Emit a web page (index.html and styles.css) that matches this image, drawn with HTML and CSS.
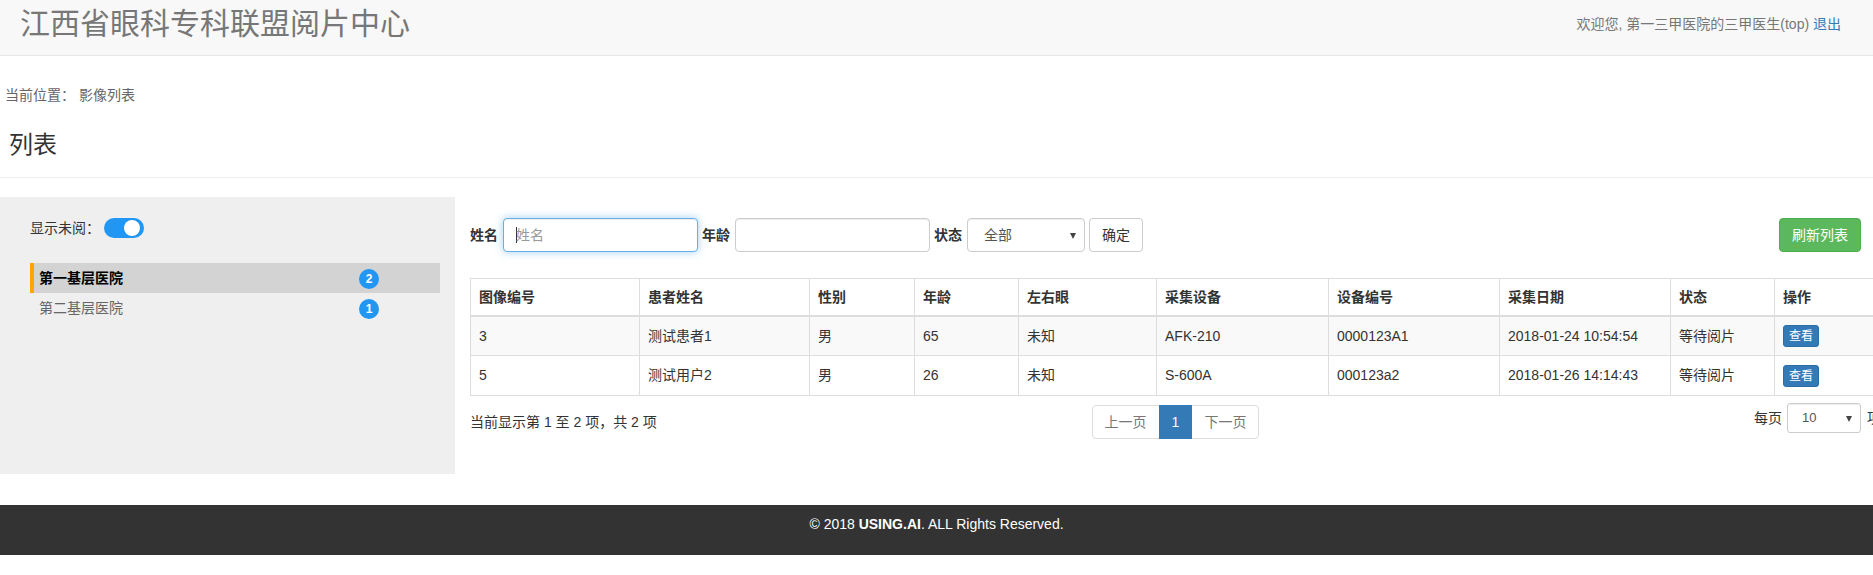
FILE: index.html
```html
<!DOCTYPE html>
<html lang="zh-CN">
<head>
<meta charset="utf-8">
<title>江西省眼科专科联盟阅片中心</title>
<link rel="stylesheet" href="styles.css">
</head>
<body>
<header class="navbar">
  <div class="brand">江西省眼科专科联盟阅片中心</div>
  <div class="user">欢迎您, 第一三甲医院的三甲医生(top) <a href="#" class="logout">退出</a></div>
</header>

<div class="page-head">
  <div class="crumb">当前位置： 影像列表</div>
  <h3 class="page-title">列表</h3>
</div>
<hr class="divider">

<div class="content">
  <aside class="sidebar">
    <div class="toggle-row">
      <span class="toggle-label">显示未阅：</span>
      <span class="switch"><span class="knob"></span></span>
    </div>
    <ul class="hosp-list">
      <li class="hosp active"><span class="hosp-name">第一基层医院</span><span class="badge">2</span></li>
      <li class="hosp"><span class="hosp-name">第二基层医院</span><span class="badge">1</span></li>
    </ul>
  </aside>

  <main class="main">
    <div class="filter">
      <label class="f-label">姓名</label>
      <input class="f-input focused" type="text" placeholder="姓名">
      <label class="f-label">年龄</label>
      <input class="f-input" type="text">
      <label class="f-label">状态</label>
      <div class="select-wrap status-select">
        <select class="f-select"><option>全部</option></select>
      </div>
      <button class="btn btn-default">确定</button>
      <button class="btn btn-success">刷新列表</button>
    </div>

    <table class="grid">
      <colgroup>
        <col class="c1"><col class="c2"><col class="c3"><col class="c4"><col class="c5">
        <col class="c6"><col class="c7"><col class="c8"><col class="c9"><col class="c10">
      </colgroup>
      <thead>
        <tr>
          <th>图像编号</th><th>患者姓名</th><th>性别</th><th>年龄</th><th>左右眼</th>
          <th>采集设备</th><th>设备编号</th><th>采集日期</th><th>状态</th><th>操作</th>
        </tr>
      </thead>
      <tbody>
        <tr class="odd">
          <td>3</td><td>测试患者1</td><td>男</td><td>65</td><td>未知</td>
          <td>AFK-210</td><td>0000123A1</td><td>2018-01-24 10:54:54</td><td>等待阅片</td>
          <td><button class="btn-xs">查看</button></td>
        </tr>
        <tr>
          <td>5</td><td>测试用户2</td><td>男</td><td>26</td><td>未知</td>
          <td>S-600A</td><td>000123a2</td><td>2018-01-26 14:14:43</td><td>等待阅片</td>
          <td><button class="btn-xs">查看</button></td>
        </tr>
      </tbody>
    </table>

    <div class="table-foot">
      <div class="info">当前显示第 1 至 2 项，共 2 项</div>
      <ul class="pagination">
        <li class="pg disabled"><a href="#">上一页</a></li>
        <li class="pg current"><a href="#">1</a></li>
        <li class="pg disabled"><a href="#">下一页</a></li>
      </ul>
      <div class="length">
        <span>每页</span>
        <div class="select-wrap len-select">
          <select class="f-select small"><option>10</option></select>
        </div>
        <span>项</span>
      </div>
    </div>
  </main>
</div>

<footer class="footer">© 2018 <b>USING.AI</b>. ALL Rights Reserved.</footer>
</body>
</html>
```

FILE: styles.css
```css
html {
  overflow-x: hidden;
}

body {
  margin: 0;
  font-family: "Liberation Sans", Arial, "Noto Sans CJK SC", sans-serif;
  font-size: 14px;
  line-height: 20px;
  color: #333;
  background: #fff;
  overflow-x: hidden;
}

/* Header */
.navbar {
  height: 55px;
  background: #f8f8f8;
  border-bottom: 1px solid #e7e7e7;
  display: flex;
  align-items: center;
  justify-content: space-between;
  padding: 0 32px 0 20px;
}

.brand {
  font-size: 30px;
  line-height: 36px;
  color: #777;
  margin-top: -8px;
}

.user {
  color: #777;
  font-size: 14px;
  margin-top: -8px;
}

.logout {
  color: #337ab7;
  text-decoration: none;
}

/* Page heading */
.page-head {
  padding: 0 0 0 5px;
}

.crumb {
  margin-top: 29px;
  color: #666;
  font-size: 14px;
  line-height: 20px;
}

.page-title {
  margin: 26px 0 0 4px;
  font-size: 24px;
  line-height: 28px;
  font-weight: normal;
  color: #333;
}

.divider {
  margin: 18px 0 0;
  border: 0;
  border-top: 1px solid #eee;
  height: 0;
}

/* Content */
.content {
  display: flex;
  align-items: flex-start;
  margin-top: 19px;
}

.sidebar {
  flex: 0 0 455px;
  height: 277px;
  box-sizing: border-box;
  background: #efefef;
  padding: 21px 0 0 30px;
}

.toggle-row {
  display: flex;
  align-items: center;
  height: 20px;
}

.toggle-label {
  color: #333;
  margin-right: 4px;
}

.switch {
  width: 40px;
  height: 20px;
  border-radius: 10px;
  background: #2196f3;
  display: flex;
  align-items: center;
  justify-content: flex-end;
  padding-right: 4px;
  box-sizing: border-box;
}

.knob {
  width: 16px;
  height: 16px;
  border-radius: 50%;
  background: #fff;
}

.hosp-list {
  list-style: none;
  margin: 25px 0 0;
  padding: 0;
  width: 410px;
}

.hosp {
  height: 30px;
  display: flex;
  align-items: center;
  justify-content: space-between;
  box-sizing: border-box;
  padding: 0 61px 0 9px;
  color: #666;
}

.hosp.active {
  background: #d3d3d3;
  border-left: 4px solid #ffa500;
  padding-left: 5px;
  color: #000;
  font-weight: bold;
}

.badge {
  width: 20px;
  height: 20px;
  border-radius: 50%;
  background: #2196f3;
  color: #fff;
  font-size: 12px;
  font-weight: bold;
  line-height: 20px;
  text-align: center;
  margin-top: 2px;
}

/* Main */
.main {
  flex: 0 0 1410px;
  margin-left: 15px;
  padding-top: 21px;
}

.filter {
  display: flex;
  align-items: center;
  height: 34px;
}

.f-label {
  font-weight: bold;
  margin-right: 5px;
  color: #333;
}

.f-input {
  width: 195px;
  height: 34px;
  box-sizing: border-box;
  border: 1px solid #ccc;
  border-radius: 4px;
  padding: 6px 12px;
  font: inherit;
  color: #555;
  box-shadow: inset 0 1px 1px rgba(0, 0, 0, .075);
  margin-right: 4px;
  outline: none;
}

.f-input::placeholder {
  color: #999;
}

.f-input.focused {
  border-color: #66afe9;
  box-shadow: inset 0 1px 1px rgba(0, 0, 0, .075), 0 0 8px rgba(102, 175, 233, .6);
  background-image: linear-gradient(#333, #333);
  background-size: 1px 16px;
  background-repeat: no-repeat;
  background-position: 12px center;
}

.select-wrap {
  position: relative;
  margin-right: 4px;
}

.select-wrap::after {
  content: "";
  position: absolute;
  top: 50%;
  margin-top: -2px;
  right: 9px;
  border-left: 3.5px solid transparent;
  border-right: 3.5px solid transparent;
  border-top: 6px solid #444;
}

.f-select {
  -webkit-appearance: none;
  appearance: none;
  width: 118px;
  height: 34px;
  box-sizing: border-box;
  border: 1px solid #ccc;
  border-radius: 4px;
  padding: 0 16px;
  font: inherit;
  color: #555;
  background: #fff;
  box-shadow: inset 0 1px 1px rgba(0, 0, 0, .075);
  outline: none;
}

.f-select.small {
  width: 74px;
  height: 30px;
  padding: 0 14px;
  font-size: 13px;
  border-radius: 3px;
}

.btn {
  height: 34px;
  box-sizing: border-box;
  padding: 6px 12px;
  font: inherit;
  line-height: 20px;
  border-radius: 4px;
  border: 1px solid #ccc;
  background: #fff;
  color: #333;
}

.btn-success {
  margin-left: auto;
  margin-right: 20px;
  background: #5cb85c;
  border-color: #4cae4c;
  color: #fff;
}

/* Table */
.grid {
  width: 1410px;
  margin-top: 26px;
  table-layout: fixed;
  border-collapse: collapse;
  border: 1px solid #ddd;
}

.c1 { width: 169px; }
.c2 { width: 170px; }
.c3 { width: 105px; }
.c4 { width: 104px; }
.c5 { width: 138px; }
.c6 { width: 172px; }
.c7 { width: 171px; }
.c8 { width: 171px; }
.c9 { width: 104px; }
.c10 { width: 106px; }

.grid th,
.grid td {
  border: 1px solid #ddd;
  padding: 8px;
  text-align: left;
  vertical-align: middle;
  line-height: 20px;
  white-space: nowrap;
}

.grid th {
  font-weight: bold;
  border-bottom-width: 2px;
}

.grid td {
  height: 22px;
}

.grid tr.odd td {
  background: #f9f9f9;
}

.btn-xs {
  height: 22px;
  padding: 1px 5px;
  font: inherit;
  font-size: 12px;
  line-height: 18px;
  border: 1px solid #2e6da4;
  border-radius: 3px;
  background: #337ab7;
  color: #fff;
  vertical-align: middle;
}

/* Table footer */
.table-foot {
  display: grid;
  grid-template-columns: 1fr auto 1fr;
  align-items: start;
  margin-top: 7px;
}

.info {
  margin-top: 9px;
  color: #333;
  font-size: 14px;
}

.pagination {
  list-style: none;
  margin: 2px 0 0;
  padding: 0;
  display: flex;
}

.pg a {
  display: block;
  padding: 6px 12px;
  line-height: 20px;
  border: 1px solid #ddd;
  margin-left: -1px;
  color: #777;
  text-decoration: none;
  background: #fff;
}

.pg:first-child a {
  margin-left: 0;
  border-radius: 4px 0 0 4px;
}

.pg:last-child a {
  border-radius: 0 4px 4px 0;
}

.pg.current a {
  background: #337ab7;
  border-color: #337ab7;
  color: #fff;
  position: relative;
}

.length {
  justify-self: end;
  display: flex;
  align-items: center;
  color: #333;
  height: 30px;
}

.length span:first-child {
  margin-right: 5px;
}

.len-select {
  margin-right: 6px;
}

/* Footer */
.footer {
  margin-top: 31px;
  height: 50px;
  box-sizing: border-box;
  padding-top: 9px;
  background: #333;
  color: #fff;
  text-align: center;
  font-size: 14px;
  line-height: 20px;
}
```
